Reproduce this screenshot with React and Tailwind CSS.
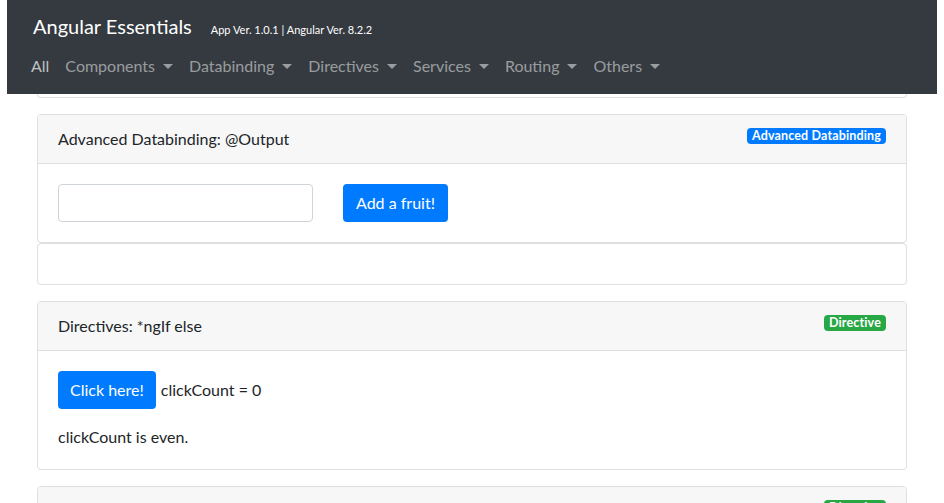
import React from "react";

const font = { fontFamily: "Lato, 'Open Sans', sans-serif" };

function Caret() {
  return (
    <span className="ml-[8px] inline-block h-0 w-0 border-x-[5px] border-t-[5px] border-x-transparent border-t-current align-[3px]" />
  );
}

function NavItem({ label, active, caret = true }) {
  return (
    <span className={`px-2 text-[16px] leading-6 ${active ? "text-[#bfc1c3]" : "text-white/50"}`}>
      {label}
      {caret && <Caret />}
    </span>
  );
}

function Badge({ children, color }) {
  return (
    <span className={`mt-[1px] inline-flex h-[16px] items-center rounded-[4px] px-[5px] text-[12.5px] font-bold leading-none tracking-[0.15px] text-white ${color}`}>
      {children}
    </span>
  );
}

function CardHeader({ title, badge, color }) {
  return (
    <div className="flex items-start justify-between border-b border-[#dfdfdf] bg-[#f7f7f7] px-5 py-3">
      <span className="min-h-6 text-[16px] leading-6 text-[#212529]">{title}</span>
      <Badge color={color}>{badge}</Badge>
    </div>
  );
}

export default function App() {
  return (
    <div className="min-h-screen bg-white text-[#212529]" style={font}>
      <div className="mx-[7px] h-[94px] bg-[#343a40] px-[16px] pt-[11px]">
        <div className="flex h-[30px] items-baseline pl-[10px]">
          <span className="text-[20px] leading-[30px] text-white">Angular Essentials</span>
          <span className="ml-[19px] text-[11px] text-white">App Ver. 1.0.1 | Angular Ver. 8.2.2</span>
        </div>
        <div className="mt-[13px] flex">
          <NavItem label="All" active caret={false} />
          <NavItem label="Components" />
          <NavItem label="Databinding" />
          <NavItem label="Directives" />
          <NavItem label="Services" />
          <NavItem label="Routing" />
          <NavItem label="Others" />
        </div>
      </div>

      <div className="mx-auto w-[870px]">
        <div className="mb-4 h-[4px] rounded-b-[4px] border-x border-b border-[#dfdfdf]" />

        <div className="overflow-hidden rounded-[4px] border border-[#dfdfdf]">
          <CardHeader title="Advanced Databinding: @Output" badge="Advanced Databinding" color="bg-[#007bff]" />
          <div className="flex items-center p-5">
            <input className="h-[38px] w-[255px] rounded-[4px] border border-[#ced4da] px-3 text-[16px] outline-none" />
            <button className="ml-[30px] h-[38px] rounded-[4px] bg-[#007bff] px-[13px] text-[16px] text-white">
              Add a fruit!
            </button>
          </div>
        </div>

        <div className="mb-4 rounded-[4px] border border-[#dfdfdf]">
          <div className="h-[40px]" />
        </div>

        <div className="mb-4 overflow-hidden rounded-[4px] border border-[#dfdfdf]">
          <CardHeader title="Directives: *ngIf else" badge="Directive" color="bg-[#28a745]" />
          <div className="p-5 text-[16px] leading-6">
            <div className="flex items-center">
              <button className="h-[38px] rounded-[4px] bg-[#007bff] px-3 text-[16px] text-white">Click here!</button>
              <span className="ml-[5px]">clickCount = 0</span>
            </div>
            <p className="mt-4">clickCount is even.</p>
          </div>
        </div>

        <div className="mb-4 overflow-hidden rounded-[4px] border border-[#dfdfdf]">
          <CardHeader title="" badge="Directive" color="bg-[#28a745]" />
          <div className="h-[80px]" />
        </div>
      </div>
    </div>
  );
}
